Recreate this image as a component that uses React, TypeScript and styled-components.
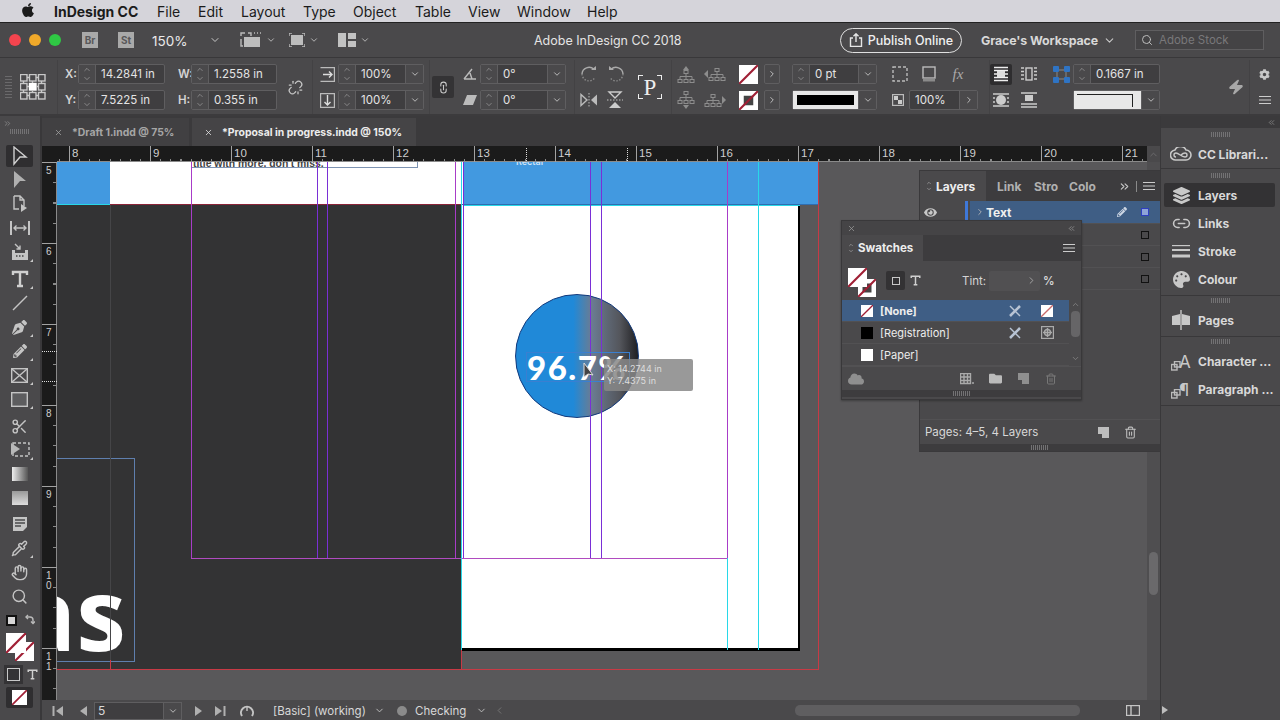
import React from 'react'
import styled, { createGlobalStyle } from 'styled-components'
import {
  ChevronDown,
  ChevronRight,
  ChevronLeft,
  ChevronUp,
  ChevronsRight,
  ChevronsLeft,
  Scissors,
  Search,
  Pipette,
  Hand,
  Trash2,
  X,
  Zap,
  Link2,
  Unlink,
} from 'lucide-react'
import { FaApple, FaCog, FaEye, FaFolder, FaLayerGroup, FaPalette, FaPencilAlt, FaPenNib, FaCloud } from 'react-icons/fa'

const GlobalStyle = createGlobalStyle`
  html, body { margin: 0; padding: 0; background: #4a494b; }
  * { box-sizing: border-box; }
  #root { width: 1280px; height: 720px; overflow: hidden; }
`

const panel = '#4a494b'
const line = '#5f5e60'
const ink = '#d6d6d6'

/* ---------- small drawings ---------- */

const Ico = styled.svg`
  display: block;
  flex: none;
  fill: none;
  stroke: currentColor;
  stroke-width: 1.4;
`

const Grid3 = () => (
  <Ico width="26" height="26" viewBox="0 0 26 26" stroke-width="1">
    {[0, 9, 18].map((y) =>
      [0, 9, 18].map((x) => (
        <rect
          key={`${x}${y}`}
          x={x + 0.5}
          y={y + 0.5}
          width="6.5"
          height="6.5"
          fill={x === 9 && y === 9 ? '#fff' : 'none'}
          stroke={x === 9 && y === 9 ? '#fff' : '#c8c8c8'}
        />
      ))
    )}
    <path d="M7 3.5h2M16 3.5h2M7 12.5h2M16 12.5h2M7 21.5h2M16 21.5h2M3.5 7v2M3.5 16v2M12.5 7v2M12.5 16v2M21.5 7v2M21.5 16v2" stroke="#c8c8c8" />
  </Ico>
)
const ScaleX = () => (
  <Ico width="15" height="15" viewBox="0 0 15 15">
    <path d="M.5.5h14v14H.5" stroke="#bbb" />
    <path d="M3 7.5h9M9 4.5l3 3-3 3" stroke="#ddd" />
  </Ico>
)
const ScaleY = () => (
  <Ico width="15" height="15" viewBox="0 0 15 15">
    <path d="M.5.5h14v14H.5z" stroke="#bbb" />
    <path d="M7.5 2v10M4.5 9l3 3 3-3" stroke="#ddd" />
  </Ico>
)
const Angle = () => (
  <Ico width="14" height="12" viewBox="0 0 14 12">
    <path d="M1 11h12M1 11L9 1M7 5l2 6" stroke="#bbb" />
  </Ico>
)
const Shear = () => (
  <Ico width="14" height="10" viewBox="0 0 14 10">
    <path d="M4 0h10l-4 10H0z" fill="#bbb" stroke="none" />
  </Ico>
)
const Rotate = ({ flip }: { flip?: boolean }) => (
  <Ico width="18" height="16" viewBox="0 0 18 16" style={flip ? { transform: 'scaleX(-1)' } : undefined}>
    <path d="M14 3.5A7 7 0 0 0 2 8" stroke="#aaa" />
    <path d="M2 8a7 7 0 0 0 13 3.5" stroke="#888" strokeDasharray="1.5 1.5" />
    <path d="M11 4h5V0z" fill="#aaa" stroke="none" />
  </Ico>
)
const FlipH = () => (
  <Ico width="18" height="14" viewBox="0 0 18 14">
    <path d="M1 1.5v11L7 7z" stroke="#bbb" />
    <path d="M17 1.5v11L11 7z" fill="#bbb" stroke="none" />
    <path d="M9 0v14" stroke="#999" strokeDasharray="1.5 1.5" />
  </Ico>
)
const FlipV = () => (
  <Ico width="16" height="18" viewBox="0 0 16 18">
    <path d="M2 1h12L8 7z" stroke="#ccc" />
    <path d="M2 17h12L8 11z" fill="#ccc" stroke="none" />
    <path d="M0 9h16" stroke="#999" strokeDasharray="1.5 1.5" />
  </Ico>
)
const Org = ({ d, dx = 0, dy = 0 }: { d: string; dx?: number; dy?: number }) => (
  <Ico width="22" height="18" viewBox="0 0 22 18">
    <g transform={`translate(${dx} ${dy})`} stroke="#8d8d8d" strokeWidth="1">
      <rect x="7" y="0.500" width="4" height="3" />
      <path d="M9 3.500v3M3 9.500V6.500h12v3M9 6.500v3" />
      <rect x="1" y="9.500" width="4" height="3" />
      <rect x="7" y="9.500" width="4" height="3" />
      <rect x="13" y="9.500" width="4" height="3" />
    </g>
    <path d={d} fill="#8d8d8d" stroke="none" />
  </Ico>
)
const CornerBox = () => (
  <Ico width="16" height="16" viewBox="0 0 16 16">
    <rect x="1" y="1" width="14" height="14" stroke="#bbb" strokeDasharray="3 2" />
  </Ico>
)
const DropBox = () => (
  <Ico width="14" height="16" viewBox="0 0 14 16">
    <rect x="1" y="1" width="12" height="11" stroke="#bbb" />
    <path d="M1 14h12" stroke="#8a8a8a" strokeWidth="3" />
  </Ico>
)
const Checker = () => (
  <Ico width="12" height="12" viewBox="0 0 12 12">
    <rect x=".5" y=".5" width="11" height="11" stroke="#bbb" />
    <path d="M2 2h4v4H2zM6 6h4v4H6z" fill="#ccc" stroke="none" />
  </Ico>
)
const WrapA = () => (
  <Ico width="16" height="16" viewBox="0 0 16 16">
    <path d="M1 1.5h14M1 4.5h14M1 8h14M1 11.5h14M1 14.5h14" stroke="#eee" />
    <rect x="4" y="5" width="8" height="6" fill="#ddd" stroke="none" />
  </Ico>
)
const WrapB = () => (
  <Ico width="16" height="16" viewBox="0 0 16 16">
    <rect x="5" y="2" width="6" height="12" stroke="#ccc" />
    <path d="M0 2h3M0 5.5h3M0 9h3M0 13h3M13 2h3M13 5.5h3M13 9h3M13 13h3" stroke="#ccc" />
  </Ico>
)
const WrapC = () => (
  <Ico width="16" height="16" viewBox="0 0 16 16">
    <circle cx="8" cy="8" r="5" fill="#ccc" stroke="none" />
    <path d="M0 2h16M0 14h16M0 6h2M14 6h2M0 10h2M14 10h2" stroke="#ccc" />
  </Ico>
)
const WrapD = () => (
  <Ico width="16" height="16" viewBox="0 0 16 16">
    <rect x="4" y="3" width="8" height="6" fill="#ccc" stroke="none" />
    <path d="M0 1h16M0 12h16M0 15h16" stroke="#ccc" />
  </Ico>
)
const Corners = () => (
  <Ico width="17" height="17" viewBox="0 0 17 17">
    <rect x="4" y="4" width="9" height="9" stroke="#777" />
    {[0, 11].map((y) => [0, 11].map((x) => <rect key={`${x}${y}`} x={x} y={y} width="6" height="6" rx="1" fill="#2f74c4" stroke="none" />))}
  </Ico>
)
const Burger = () => (
  <Ico width="12" height="8" viewBox="0 0 12 8">
    <path d="M0 .5h12M0 4h12M0 7.5h12" stroke="#ccc" strokeWidth="1" />
  </Ico>
)
const Frames = () => (
  <Ico width="22" height="16" viewBox="0 0 22 16">
    <path d="M1 4V1h4M8 1h3v3" stroke="#bbb" />
    <rect x="4" y="5" width="16" height="10" fill="#bdbdbd" stroke="none" />
    <path d="M1 7v7h2" stroke="#bbb" />
    <path d="M14 1h1M17 1h1M20 1h1" stroke="#bbb" />
  </Ico>
)
const FrameFit = () => (
  <Ico width="16" height="14" viewBox="0 0 16 14">
    <rect x="2" y="2" width="12" height="10" fill="#bdbdbd" stroke="none" />
    <path d="M0 3V0h3M13 0h3v3M0 11v3h3M13 14h3v-3" stroke="#bbb" />
  </Ico>
)
const Arrange = () => (
  <Ico width="18" height="14" viewBox="0 0 18 14">
    <path d="M0 0h8v14H0zM10 0h8v6h-8zM10 8h8v6h-8z" fill="#c2c2c2" stroke="none" />
  </Ico>
)
const Share = () => (
  <Ico width="14" height="14" viewBox="0 0 14 14">
    <path d="M4 5H1.5v8.5h11V5H10M7 9V1M4.5 3.3L7 .8l2.5 2.5" stroke="#e6e6e6" />
  </Ico>
)
const Arrow = ({ hollow }: { hollow?: boolean }) => (
  <Ico width="16" height="20" viewBox="0 0 16 20">
    <path d="M2 1l12 10H8l-6 7z" fill={hollow ? 'none' : '#b0b0b0'} stroke={hollow ? '#cfcfcf' : 'none'} />
  </Ico>
)
const PageTool = () => (
  <Ico width="16" height="18" viewBox="0 0 16 18">
    <path d="M2 1h6l4 4v6M8 1v4h4M2 1v13h5" stroke="#c4c4c4" />
    <path d="M9 9l6 4-6 4z" fill="#c4c4c4" stroke="none" />
  </Ico>
)
const GapTool = () => (
  <Ico width="20" height="14" viewBox="0 0 20 14">
    <path d="M1 0v14M19 0v14" stroke="#c4c4c4" strokeWidth="2" />
    <path d="M4 7h12M6.5 4.5L4 7l2.5 2.5M13.5 4.5L16 7l-2.5 2.5" stroke="#c4c4c4" />
  </Ico>
)
const Collector = () => (
  <Ico width="18" height="18" viewBox="0 0 18 18">
    <path d="M1 7h3v3h10V7h3v10H1z" fill="#c4c4c4" stroke="none" />
    <path d="M4 1l5 5M9 2.5V6H5.500" stroke="#c4c4c4" />
    <path d="M5 13h1.500M8 13h1.500M11 13h1.500" stroke="#444" />
  </Ico>
)
const TypeTool = ({ size = 18 }: { size?: number }) => (
  <Ico width={size} height={size} viewBox="0 0 18 18">
    <path d="M2 5V2h14v3M9 2v14M6 16h6" stroke="#d0d0d0" strokeWidth="2.4" />
  </Ico>
)
const LineTool = () => (
  <Ico width="16" height="16" viewBox="0 0 16 16">
    <path d="M1 15L15 1" stroke="#c4c4c4" strokeWidth="1.5" />
  </Ico>
)
const CrossFrame = () => (
  <Ico width="17" height="15" viewBox="0 0 17 15">
    <rect x=".7" y=".7" width="15.600" height="13.600" stroke="#c4c4c4" />
    <path d="M1 1l15 13M16 1L1 14" stroke="#c4c4c4" />
  </Ico>
)
const RectTool = () => (
  <Ico width="17" height="15" viewBox="0 0 17 15">
    <rect x=".7" y=".7" width="15.600" height="13.600" stroke="#c4c4c4" fill="#5d5d5f" />
  </Ico>
)
const FreeTrans = () => (
  <Ico width="20" height="16" viewBox="0 0 20 16">
    <rect x="3" y="1" width="16" height="13" stroke="#c4c4c4" strokeDasharray="3 2" />
    <path d="M1 1l9 6-9 6z" fill="#b8b8b8" stroke="none" />
  </Ico>
)
const Grad = ({ id, vertical }: { id: string; vertical?: boolean }) => (
  <Ico width="16" height="14" viewBox="0 0 16 14">
    <defs>
      <linearGradient id={id} x1="0" y1="0" x2={vertical ? '0' : '1'} y2={vertical ? '1' : '0'}>
        <stop offset="0" stopColor={vertical ? '#999' : '#eee'} />
        <stop offset="1" stopColor={vertical ? '#ddd' : '#555'} />
      </linearGradient>
    </defs>
    <rect width="16" height="14" fill={`url(#${id})`} stroke="none" />
  </Ico>
)
const Note = () => (
  <Ico width="14" height="14" viewBox="0 0 14 14">
    <path d="M0 0h14v10l-4 4H0z" fill="#c4c4c4" stroke="none" />
    <path d="M2 3h10M2 6h10M2 9h6" stroke="#4a494b" />
  </Ico>
)
const Slash = ({ w = 18, bg = '#fff', stroke = '#a01f35', inner }: { w?: number; bg?: string; stroke?: string; inner?: boolean }) => (
  <Ico width={w} height={w} viewBox="0 0 18 18">
    <rect width="18" height="18" fill={bg} stroke="none" />
    {inner && <rect x="4.500" y="4.500" width="9" height="9" fill="#444" stroke="none" />}
    <path d="M0 18L18 0" stroke={stroke} strokeWidth="2" />
  </Ico>
)
const SwapArrow = () => (
  <Ico width="11" height="11" viewBox="0 0 11 11">
    <path d="M2 3h4a3 3 0 0 1 3 3v3" stroke="#bbb" />
    <path d="M4 1L2 3l2 2M7 7.500L9 9.500l2-2" stroke="#bbb" />
  </Ico>
)
const CCLogo = () => (
  <Ico width="22" height="14" viewBox="0 0 22 14">
    <path d="M6 13a5 5 0 0 1-1-10 6 6 0 0 1 11 0 5 5 0 0 1 0 10z" stroke="#c8c8c8" strokeWidth="1.600" />
    <path d="M6 10a2 2 0 0 1 0-4c3 0 5 4 9 4a2 2 0 0 0 0-4c-2 0-3 1-4 2" stroke="#c8c8c8" />
  </Ico>
)
const StrokeLines = () => (
  <Ico width="18" height="13" viewBox="0 0 18 13">
    <path d="M0 .5h18" stroke="#c8c8c8" />
    <path d="M0 5h18" stroke="#c8c8c8" strokeWidth="2" />
    <path d="M0 11h18" stroke="#c8c8c8" strokeWidth="3" />
  </Ico>
)
const PagesIcon = () => (
  <Ico width="18" height="20" viewBox="0 0 18 20">
    <path d="M0 6l8-2v11H0zM10 4l8 2v9h-8z" fill="#c8c8c8" stroke="none" />
    <path d="M9 0v20" stroke="#c8c8c8" />
  </Ico>
)
const StackA = () => (
  <Ico width="10" height="10" viewBox="0 0 10 10">
    <rect x=".5" y="3.500" width="5.500" height="5.500" stroke="#bbb" />
    <rect x="3.500" y=".5" width="5.500" height="5.500" stroke="#bbb" />
  </Ico>
)
const NewPage = () => (
  <Ico width="11" height="11" viewBox="0 0 11 11">
    <path d="M0 0h11v11H4V7H0z" fill="currentColor" stroke="none" />
  </Ico>
)
const GridMenu = () => (
  <Ico width="14" height="12" viewBox="0 0 14 12">
    <path d="M.5.5h10v10H.5zM.5 4h10M.5 7.500h10M4 .5v10M7.500 .5v10" stroke="#aaa" />
    <path d="M12 10h2" stroke="#aaa" />
  </Ico>
)
const DirectGlyph = () => (
  <Ico width="12" height="12" viewBox="0 0 12 12">
    <path d="M1 1l10 10" stroke="#b8c4d4" strokeWidth="1.500" />
    <path d="M11 1L1 11" stroke="#b8c4d4" strokeWidth="2.500" />
  </Ico>
)
const RegMark = () => (
  <Ico width="13" height="13" viewBox="0 0 13 13">
    <rect x=".5" y=".5" width="12" height="12" stroke="#aaa" />
    <circle cx="6.500" cy="6.500" r="3" stroke="#aaa" />
    <path d="M6.500 2v9M2 6.500h9" stroke="#aaa" />
  </Ico>
)
const Clock = () => (
  <Ico width="14" height="14" viewBox="0 0 14 14">
    <path d="M2 12A6 6 0 1 1 12 12" stroke="#c4c4c4" strokeWidth="2" />
    <path d="M7 7V3" stroke="#c4c4c4" />
  </Ico>
)
const Skip = ({ back }: { back?: boolean }) => (
  <Ico width="11" height="10" viewBox="0 0 11 10" style={back ? { transform: 'scaleX(-1)' } : undefined}>
    <path d="M0 0l7 5-7 5z" fill="#b0b0b0" stroke="none" />
    <path d="M9.500 0v10" stroke="#b0b0b0" strokeWidth="2" />
  </Ico>
)
const Step = ({ back }: { back?: boolean }) => (
  <Ico width="7" height="10" viewBox="0 0 7 10" style={back ? { transform: 'scaleX(-1)' } : undefined}>
    <path d="M0 0l7 5-7 5z" fill="#b0b0b0" stroke="none" />
  </Ico>
)
const Pointer = () => (
  <Ico width="14" height="18" viewBox="0 0 14 18">
    <path d="M1 1v14l4-3 5 1z" fill="#444" stroke="#ddd" strokeWidth="1" />
  </Ico>
)

/* ---------- shell ---------- */

const Screen = styled.div`
  width: 1280px;
  height: 720px;
  display: flex;
  flex-direction: column;
  overflow: hidden;
  background: ${panel};
  color: ${ink};
  font-family: 'Inter', 'Liberation Sans', sans-serif;
  font-size: 12px;
`
const MenuBar = styled.div`
  height: 23px;
  flex: none;
  background: #d5d4da;
  border-bottom: 1px solid #222;
  display: flex;
  align-items: center;
  color: #1b1b1b;
  font-size: 14px;
  padding-left: 20px;
`
const MenuItem = styled.span<{ $w?: number; $bold?: boolean }>`
  width: ${(p) => p.$w}px;
  font-weight: ${(p) => (p.$bold ? 700 : 400)};
  flex: none;
`
const TitleBar = styled.div`
  height: 35px;
  flex: none;
  display: flex;
  align-items: center;
  border-bottom: 1px solid #39383a;
  position: relative;
`
const Light = styled.span<{ $c: string }>`
  width: 12px;
  height: 12px;
  border-radius: 50%;
  background: ${(p) => p.$c};
  margin-right: 8px;
  flex: none;
`
const Lights = styled.div`
  display: flex;
  padding-left: 9px;
  width: 82px;
`
const Badge = styled.span`
  width: 16px;
  height: 16px;
  background: #a9a9a9;
  color: #59585a;
  font-size: 10px;
  font-weight: 700;
  display: flex;
  align-items: center;
  justify-content: center;
  margin-right: 20px;
  flex: none;
`
const Zoom = styled.span`
  font-size: 13.5px;
  color: #eaeaea;
  width: 55px;
  margin-left: -2px;
  margin-top: 2px;
`
const ViewGroup = styled.div`
  display: flex;
  align-items: center;
  gap: 4px;
  width: 49px;
  flex: none;
  color: #c8c8c8;
`
const AppTitle = styled.span`
  width: 146px;
  flex: none;
  font-size: 12.5px;
  color: #e4e4e4;
  margin-left: 147px;
  margin-right: 160px;
  white-space: nowrap;
`
const Publish = styled.span`
  width: 122px;
  height: 25px;
  border: 1px solid #e0e0e0;
  border-radius: 13px;
  display: flex;
  align-items: center;
  justify-content: center;
  gap: 5px;
  color: #f0f0f0;
  font-size: 12.5px;
  font-weight: 500;
  flex: none;
`
const Workspace = styled.span`
  margin-left: 19px;
  width: 115px;
  flex: none;
  font-size: 12.4px;
  font-weight: 700;
  color: #d8d8d8;
  white-space: nowrap;
  letter-spacing: -0.1px;
`
const StockSearch = styled.div`
  width: 129px;
  height: 20px;
  flex: none;
  margin-left: 13px;
  border: 1px solid #5f5e60;
  background: #444345;
  display: flex;
  align-items: center;
  gap: 6px;
  padding-left: 5px;
  font-size: 11.5px;
  color: #79787a;
  white-space: nowrap;
`

/* ---------- control panel ---------- */

const ControlPanel = styled.div`
  height: 58px;
  flex: none;
  display: flex;
  padding-top: 2px;
  border-bottom: 2px solid #3c3b3d;
`
const Group = styled.div<{ $w: number; $line?: boolean }>`
  width: ${(p) => p.$w}px;
  flex: none;
  height: 100%;
  display: flex;
  align-items: center;
  border-right: ${(p) => (p.$line ? '1px solid #434244' : 'none')};
`
const Rows = styled.div<{ $pl?: number; $w?: number }>`
  display: grid;
  grid-template-rows: 20px 20px;
  row-gap: 6px;
  padding-left: ${(p) => p.$pl ?? 0}px;
  width: ${(p) => (p.$w ? `${p.$w}px` : 'auto')};
  flex: none;
`
const Row = styled.div<{ $gap?: number }>`
  display: flex;
  align-items: center;
  gap: ${(p) => p.$gap ?? 0}px;
  height: 20px;
`
const Label = styled.span<{ $w: number }>`
  width: ${(p) => p.$w}px;
  flex: none;
  font-size: 11.5px;
  font-weight: 600;
  color: #d4d4d4;
`
const IconSlot = styled.span<{ $w: number }>`
  width: ${(p) => p.$w}px;
  height: 20px;
  flex: none;
  display: flex;
  align-items: center;
  justify-content: center;
  color: #c8c8c8;
`
const Field = styled.div<{ $w: number }>`
  width: ${(p) => p.$w}px;
  height: 20px;
  flex: none;
  display: flex;
  align-items: stretch;
  border: 1px solid ${line};
  border-radius: 2px;
  background: #3f3e40;
`
const Spin = styled.span`
  width: 17px;
  flex: none;
  display: flex;
  flex-direction: column;
  align-items: center;
  justify-content: center;
  border-right: 1px solid ${line};
  color: #c4c4c4;
  background: ${panel};
`
const Val = styled.span`
  flex: 1;
  min-width: 0;
  padding-left: 5px;
  font-size: 11.5px;
  line-height: 18px;
  color: #e4e4e4;
  white-space: nowrap;
`
const Drop = styled.span`
  width: 18px;
  flex: none;
  display: flex;
  align-items: center;
  justify-content: center;
  border-left: 1px solid ${line};
  color: #cfcfcf;
  background: #4a494b;
`
const Spinner = () => (
  <Spin>
    <ChevronUp size={10} strokeWidth={1.3} />
    <ChevronDown size={10} strokeWidth={1.3} />
  </Spin>
)
const NumField = ({ w, value, drop, next }: { w: number; value: string; drop?: boolean; next?: boolean }) => (
  <Field $w={w}>
    {!next && <Spinner />}
    <Val>{value}</Val>
    {drop && (
      <Drop>
        <ChevronDown size={10} />
      </Drop>
    )}
    {next && (
      <Drop>
        <ChevronRight size={10} />
      </Drop>
    )}
  </Field>
)
const ChainBtn = styled.span`
  width: 22px;
  height: 22px;
  margin-left: 2px;
  background: #343335;
  border-radius: 2px;
  display: flex;
  align-items: center;
  justify-content: center;
  color: #c8c8c8;
`
const GlyphBox = styled.span`
  width: 26px;
  height: 26px;
  margin-left: 12px;
  flex: none;
  font-family: 'Liberation Serif', serif;
  font-size: 23px;
  line-height: 26px;
  text-align: center;
  color: #eee;
  border: 1px solid transparent;
  background:
    linear-gradient(#eee, #eee) 0 0 / 5px 1px no-repeat,
    linear-gradient(#eee, #eee) 0 0 / 1px 5px no-repeat,
    linear-gradient(#eee, #eee) 100% 0 / 5px 1px no-repeat,
    linear-gradient(#eee, #eee) 100% 0 / 1px 5px no-repeat,
    linear-gradient(#eee, #eee) 0 100% / 5px 1px no-repeat,
    linear-gradient(#eee, #eee) 0 100% / 1px 5px no-repeat,
    linear-gradient(#eee, #eee) 100% 100% / 5px 1px no-repeat,
    linear-gradient(#eee, #eee) 100% 100% / 1px 5px no-repeat;
`
const SmallNext = styled.span`
  width: 16px;
  height: 20px;
  flex: none;
  border: 1px solid ${line};
  border-radius: 2px;
  display: flex;
  align-items: center;
  justify-content: center;
  color: #d4d4d4;
`
const StrokePreview = styled.div`
  flex: 1;
  background: #e8e8e8;
  padding: 4px;
`
const StrokeBlack = styled.div`
  height: 10px;
  background: #000;
`
const CornerPreview = styled.div`
  flex: 1;
  background: #e8e8e8;
  position: relative;
  &::after {
    content: '';
    position: absolute;
    left: 3px;
    right: 8px;
    top: 3px;
    bottom: 2px;
    border-top: 1px solid #222;
    border-right: 1px solid #222;
  }
`
const ActiveWrap = styled.span`
  width: 22px;
  height: 21px;
  background: #2e2d2f;
  border-radius: 2px;
  display: flex;
  align-items: center;
  justify-content: center;
`
const GripV = styled.span`
  width: 7px;
  height: 22px;
  margin-left: 5px;
  flex: none;
  background: repeating-linear-gradient(#6a696b 0 1px, transparent 1px 3px);
`
const GripH = styled.div<{ $w?: number }>`
  width: ${(p) => p.$w ?? 20}px;
  height: 5px;
  margin: 0 auto;
  background: repeating-linear-gradient(90deg, #737274 0 1px, transparent 1px 2px);
`

/* ---------- body ---------- */

const Body = styled.div`
  flex: 1;
  display: flex;
  min-height: 0;
`
const Toolbox = styled.div`
  width: 42px;
  flex: none;
  display: flex;
  flex-direction: column;
  border-right: 2px solid #39383a;
  background: ${panel};
  padding-top: 2px;
  color: #c4c4c4;
`
const Collapse = styled.div`
  height: 11px;
  padding-left: 3px;
  color: #8f8f8f;
  display: flex;
  align-items: center;
`
const ToolGrip = styled(GripH)`
  margin-top: 0;
  margin-bottom: 10px;
`
const Tool = styled.div<{ $active?: boolean; $mt?: number; $more?: boolean }>`
  width: 27px;
  height: ${(p) => (p.$active ? 22 : 24)}px;
  margin: ${(p) => (p.$active ? '1px' : `${p.$mt ?? 0}px`)} 0 ${(p) => (p.$active ? '1px' : '0')} 6px;
  display: flex;
  align-items: center;
  justify-content: center;
  flex: none;
  position: relative;
  border-radius: 2px;
  background: ${(p) => (p.$active ? '#2f2e30' : 'transparent')};
  &::after {
    content: '';
    display: ${(p) => (p.$more ? 'block' : 'none')};
    position: absolute;
    right: 0;
    bottom: 2px;
    border-left: 3px solid transparent;
    border-bottom: 3px solid #c8c8c8;
  }
`
const ColorWell = styled.div`
  height: 48px;
  margin-top: 4px;
  padding: 5px 0 0 6px;
  position: relative;
`
const WellBack = styled.div`
  position: absolute;
  left: 15px;
  top: 30px;
`
const WellFront = styled.div`
  position: absolute;
  left: 6px;
  top: 21px;
`
const MiniDefault = styled.div`
  width: 11px;
  height: 11px;
  background: #d7d7d7;
  border: 2px solid #111;
  margin-top: -2px;
`
const MiniSwap = styled.span`
  position: absolute;
  left: 24px;
  top: 2px;
  color: #bbb;
`
const FormatRow = styled.div`
  display: flex;
  align-items: center;
  gap: 7px;
  height: 22px;
  padding-left: 7px;
  margin-top: 3px;
`
const FormatBtn = styled.span`
  width: 13px;
  height: 13px;
  border: 1px solid #c8c8c8;
  outline: 3px solid #343335;
  background: #343335;
`
const PreviewBtn = styled.div`
  width: 27px;
  height: 21px;
  margin: 2px 0 0 6px;
  background: #2f2e30;
  border-radius: 2px;
  display: flex;
  align-items: center;
  justify-content: center;
`

const Center = styled.div`
  width: 1118px;
  flex: none;
  display: flex;
  flex-direction: column;
`
const TabBar = styled.div`
  height: 30px;
  flex: none;
  background: #3b3a3c;
  display: flex;
  padding-top: 2px;
`
const Tab = styled.div<{ $w: number; $active?: boolean }>`
  width: ${(p) => p.$w}px;
  margin-right: 3px;
  background: ${(p) => (p.$active ? '#454446' : '#414042')};
  color: ${(p) => (p.$active ? '#ececec' : '#a6a6a6')};
  display: flex;
  align-items: center;
  gap: 9px;
  padding-left: 12px;
  font-size: 10.4px;
  font-weight: 700;
  white-space: nowrap;
`
const RulerRow = styled.div`
  height: 16px;
  flex: none;
  display: flex;
`
const RulerCorner = styled.div`
  width: 15px;
  flex: none;
  background: #1b1b1b;
`
const HRuler = styled.div`
  width: 1090px;
  flex: none;
  background:
    linear-gradient(#8a8a8a, #8a8a8a) 0 100% / 100% 1px no-repeat,
    repeating-linear-gradient(90deg, #8a8a8a 0 1px, transparent 1px 10.125px) 2px 100% / 100% 3px no-repeat,
    #1b1b1b;
  display: flex;
  padding-left: 12px;
  overflow: hidden;
  position: relative;
`
const HTick = styled.div`
  width: 81px;
  flex: none;
  height: 100%;
  padding-left: 2px;
  border-left: 1px solid #a2a2a2;
  color: #cfcfcf;
  font-family: 'Liberation Sans', sans-serif;
  font-size: 11.5px;
  line-height: 14px;
`
const HDots = styled.span<{ $x: number }>`
  position: absolute;
  left: ${(p) => p.$x}px;
  top: 2px;
  width: 1px;
  height: 14px;
  background: repeating-linear-gradient(#ddd 0 1px, transparent 1px 2px);
`
const ScrollCap = styled.div`
  width: 13px;
  flex: none;
  display: flex;
  align-items: center;
  justify-content: center;
  color: #6d6c6e;
`
const CanvasRow = styled.div`
  flex: 1;
  display: flex;
  min-height: 0;
  position: relative;
`
const VRuler = styled.div`
  width: 15px;
  flex: none;
  overflow: hidden;
  position: relative;
  background:
    linear-gradient(#8a8a8a, #8a8a8a) 100% 0 / 1px 100% no-repeat,
    repeating-linear-gradient(#8a8a8a 0 1px, transparent 1px 20.250px) 100% 0 / 4px 100% no-repeat,
    #1b1b1b;
`
const VTick = styled.div`
  height: 81px;
  border-top: 1px solid #a2a2a2;
  padding: 3px 0 0 4px;
  width: 100%;
  color: #cfcfcf;
  font-family: 'Liberation Sans', sans-serif;
  font-size: 10px;
  line-height: 10px;
`
const VDigit = styled.span`
  display: block;
`
const Stage = styled.div`
  width: 1090px;
  flex: none;
  position: relative;
  overflow: hidden;
  background: #59585a;
`
const Sheet = styled.div<{ $x: number; $y: number; $w: number; $h: number; $c: string }>`
  position: absolute;
  left: ${(p) => p.$x}px;
  top: ${(p) => p.$y}px;
  width: ${(p) => p.$w}px;
  height: ${(p) => p.$h}px;
  background: ${(p) => p.$c};
`
const PageEdge = styled(Sheet)`
  border-right: 2px solid #000;
  border-bottom: 3px solid #000;
`
const VGuide = styled.div<{ $x: number; $y: number; $h: number; $c: string }>`
  position: absolute;
  left: ${(p) => p.$x}px;
  top: ${(p) => p.$y}px;
  width: 1px;
  height: ${(p) => p.$h}px;
  background: ${(p) => p.$c};
`
const HGuide = styled.div<{ $x: number; $y: number; $w: number; $c: string }>`
  position: absolute;
  left: ${(p) => p.$x}px;
  top: ${(p) => p.$y}px;
  height: 1px;
  width: ${(p) => p.$w}px;
  background: ${(p) => p.$c};
`
const BigWordFrame = styled.div`
  position: absolute;
  left: 0;
  top: 296px;
  width: 78px;
  height: 204px;
  border: 1px solid #5f7fae;
  border-left: none;
  overflow: hidden;
`
const BigWord = styled.span`
  position: absolute;
  right: 8px;
  top: 103px;
  font-family: 'Open Sans', sans-serif;
  font-weight: 700;
  font-size: 100px;
  line-height: 100px;
  color: #fff;
`
const TopFrame = styled.div`
  position: absolute;
  left: 134px;
  top: 0;
  width: 227px;
  height: 6px;
  border: 1px solid #7d93b2;
  border-top: none;
  overflow: hidden;
  font-family: 'Liberation Sans', sans-serif;
  font-size: 10.4px;
  font-weight: 700;
  color: #444;
  line-height: 4px;
  padding-left: 1px;
  white-space: nowrap;
`
const TopText = styled.span`
  position: absolute;
  left: 459px;
  top: -6px;
  font-size: 9px;
  line-height: 11px;
  color: #cfe3f7;
  font-weight: 600;
`
const Circle = styled.div`
  position: absolute;
  left: 458px;
  top: 132px;
  width: 124px;
  height: 124px;
  border-radius: 50%;
  border: 1px solid #123a7d;
  background: linear-gradient(90deg, #2089d8 0%, #2089d8 47%, #6b7c92 62%, #54565c 85%, #1f1f22 100%);
`
const Percent = styled.span`
  position: absolute;
  left: 470px;
  top: 185px;
  font-family: 'Lato', sans-serif;
  font-weight: 900;
  font-size: 33px;
  line-height: 40px;
  letter-spacing: 1.5px;
  color: #fff;
`
const PickFrame = styled.div`
  position: absolute;
  left: 469px;
  top: 190px;
  width: 104px;
  height: 30px;
  border: 1px solid #3a7fd0;
`
const DragTip = styled.div`
  position: absolute;
  left: 547px;
  top: 197px;
  width: 89px;
  height: 32px;
  padding: 4px 0 0 3px;
  background: rgba(135, 135, 135, 0.85);
  border-radius: 2px;
  font-size: 9px;
  line-height: 12px;
  color: #dedede;
  white-space: nowrap;
`
const CursorSpot = styled.div`
  position: absolute;
  left: 526px;
  top: 200px;
`
const RulerDots = styled.div<{ $y: number }>`
  position: absolute;
  left: 0;
  top: ${(p) => p.$y}px;
  width: 15px;
  height: 1px;
  background: repeating-linear-gradient(90deg, #ddd 0 1px, transparent 1px 2px);
`
const VScroll = styled.div`
  width: 13px;
  flex: none;
  background: #4f4e50;
  padding-top: 390px;
`
const VThumb = styled.div`
  width: 9px;
  height: 43px;
  margin-left: 2px;
  border-radius: 5px;
  background: #6a696b;
`

/* ---------- floating panels ---------- */

const LayersPanel = styled.div`
  position: absolute;
  left: 877px;
  top: 8px;
  width: 241px;
  height: 282px;
  background: ${panel};
  border: 1px solid #3a393b;
  border-right: none;
  display: flex;
  flex-direction: column;
`
const PanelTabs = styled.div`
  height: 30px;
  flex: none;
  display: flex;
  align-items: center;
  background: #3d3c3e;
`
const PanelTab = styled.span<{ $w: number; $active?: boolean }>`
  width: ${(p) => p.$w}px;
  flex: none;
  height: 100%;
  display: flex;
  align-items: center;
  gap: 4px;
  padding-left: ${(p) => (p.$active ? 6 : 0)}px;
  background: ${(p) => (p.$active ? panel : 'transparent')};
  color: ${(p) => (p.$active ? '#eee' : '#b0b0b0')};
  font-size: 12px;
  font-weight: 700;
`
const TabDivider = styled.span`
  width: 11px;
  flex: none;
  height: 11px;
  margin-left: 0;
  background: linear-gradient(#8a8a8a, #8a8a8a) 5px 0 / 1px 100% no-repeat;
`
const LayerRow = styled.div<{ $sel?: boolean }>`
  height: ${(p) => (p.$sel ? 23 : 22)}px;
  flex: none;
  display: flex;
  align-items: center;
  margin-left: ${(p) => (p.$sel ? 0 : 50)}px;
  background: ${(p) => (p.$sel ? 'linear-gradient(90deg, transparent 50px, #3f5e85 50px)' : 'transparent')};
  border-bottom: 1px solid #525153;
  font-size: 12px;
  font-weight: 700;
  color: #f0f0f0;
  padding-right: 11px;
  justify-content: flex-end;
`
const LayerSquare = styled.span<{ $blue?: boolean }>`
  width: 8px;
  height: 8px;
  border: 1.500px solid ${(p) => (p.$blue ? '#2f3fc0' : '#111')};
  background: ${(p) => (p.$blue ? '#8fa4d8' : 'transparent')};
  flex: none;
`
const LayerName = styled.span`
  display: flex;
  align-items: center;
  flex: 1;
  padding-left: 7px;
  gap: 1px;
  height: 100%;
`
const EyeSlot = styled.span`
  width: 21px;
  margin-right: 24px;
  flex: none;
  display: flex;
  justify-content: center;
  color: #c8c8c8;
`
const BlueBar = styled.span`
  width: 3px;
  height: 100%;
  flex: none;
  background: #3f78d8;
`
const PanelFoot = styled.div`
  margin-top: auto;
  height: 25px;
  flex: none;
  display: flex;
  align-items: center;
  padding: 0 23px 0 5px;
  border-top: 1px solid #525153;
  font-size: 11.5px;
  color: #d8d8d8;
  gap: 0;
`
const FootText = styled.span`
  flex: 1;
`
const FootIcon = styled.span<{ $w: number }>`
  width: ${(p) => p.$w}px;
  display: flex;
  justify-content: flex-end;
  color: #bdbdbd;
`
const PanelGrip = styled.div`
  height: 7px;
  flex: none;
  background: #3d3c3e;
  display: flex;
  align-items: center;
`
const SwatchPanel = styled.div`
  position: absolute;
  left: 799px;
  top: 58px;
  width: 241px;
  height: 180px;
  background: ${panel};
  border: 1px solid #39383a;
  display: flex;
  flex-direction: column;
  box-shadow: 0 1px 2px rgba(0, 0, 0, 0.3);
`
const PanelTop = styled.div`
  height: 14px;
  flex: none;
  background: #454446;
  display: flex;
  align-items: center;
  justify-content: space-between;
  padding: 0 5px;
  color: #9a9a9a;
`
const SwatchTabs = styled.div`
  height: 26px;
  flex: none;
  display: flex;
  background: #3d3c3e;
`
const SwatchTab = styled.span`
  width: 81px;
  background: ${panel};
  display: flex;
  align-items: center;
  gap: 4px;
  padding-left: 6px;
  color: #eee;
  font-size: 11.5px;
  font-weight: 700;
`
const TabMenu = styled.span`
  flex: 1;
  display: flex;
  justify-content: flex-end;
  align-items: center;
  padding-right: 6px;
`
const Updown = styled.span`
  display: flex;
  flex-direction: column;
  color: #c0c0c0;
`
const SwatchTools = styled.div`
  height: 39px;
  flex: none;
  display: flex;
  align-items: center;
  position: relative;
  padding-left: 44px;
`
const WellSm = styled.div<{ $x: number; $y: number }>`
  position: absolute;
  left: ${(p) => p.$x}px;
  top: ${(p) => p.$y}px;
`
const FmtBtn = styled.span`
  width: 19px;
  height: 19px;
  background: #333234;
  border-radius: 2px;
  display: flex;
  align-items: center;
  justify-content: center;
  margin-right: 5px;
`
const FmtInner = styled.span`
  width: 8px;
  height: 8px;
  border: 1px solid #c8c8c8;
`
const TintLabel = styled.span`
  margin-left: 41px;
  width: 27px;
  flex: none;
  font-size: 11.5px;
  color: #d4d4d4;
  white-space: nowrap;
`
const TintField = styled.span`
  width: 51px;
  height: 20px;
  flex: none;
  background: #515052;
  border-radius: 2px;
  display: flex;
  align-items: center;
  justify-content: flex-end;
  padding-right: 3px;
  color: #a8a8a8;
`
const Pct = styled.span`
  margin-left: 3px;
  font-size: 11.5px;
  font-weight: 600;
`
const ListWrap = styled.div`
  height: 66px;
  flex: none;
  display: flex;
`
const List = styled.div`
  width: 227px;
  flex: none;
`
const SwatchRow = styled.div<{ $sel?: boolean }>`
  height: 22px;
  display: flex;
  align-items: center;
  padding-left: 19px;
  background: ${(p) => (p.$sel ? '#3f5e85' : 'transparent')};
  border-bottom: 1px solid #525153;
  font-size: 11px;
  font-weight: ${(p) => (p.$sel ? 700 : 400)};
  color: #ededed;
`
const Chip = styled.span<{ $c?: string }>`
  width: 12px;
  height: 12px;
  background: ${(p) => p.$c ?? 'transparent'};
  margin-right: 7px;
  flex: none;
`
const ChipName = styled.span`
  width: 119px;
  flex: none;
  white-space: nowrap;
`
const ChipCol = styled.span`
  width: 32px;
  flex: none;
  display: flex;
  justify-content: center;
`
const ListScroll = styled.div`
  flex: 1;
  display: flex;
  flex-direction: column;
  align-items: center;
  color: #8a8a8a;
  gap: 0;
`
const ListThumb = styled.span`
  width: 9px;
  height: 26px;
  flex: none;
  border-radius: 4px;
  margin: 2px 0 17px;
  background: #666567;
`
const SwatchFoot = styled.div`
  height: 24px;
  flex: none;
  display: flex;
  align-items: center;
  padding-left: 6px;
  border-top: 1px solid #525153;
  color: #8f8f8f;
`
const FootBtn = styled.span<{ $w: number }>`
  width: ${(p) => p.$w}px;
  display: flex;
  justify-content: flex-end;
  flex: none;
`

/* ---------- status + dock ---------- */

const StatusBar = styled.div`
  height: 20px;
  flex: none;
  display: flex;
  align-items: center;
  padding-top: 1px;
  background: ${panel};
  font-size: 11.5px;
  color: #d8d8d8;
`
const StatSlot = styled.span<{ $w: number }>`
  width: ${(p) => p.$w}px;
  height: 100%;
  flex: none;
  display: flex;
  align-items: center;
  justify-content: center;
  color: #c4c4c4;
`
const StatText = styled.span<{ $w: number }>`
  width: ${(p) => p.$w}px;
  flex: none;
  white-space: nowrap;
`
const PageBox = styled.div`
  width: 88px;
  height: 18px;
  flex: none;
  border: 1px solid ${line};
  display: flex;
  align-items: stretch;
  background: #3f3e40;
`
const PageVal = styled.span`
  flex: 1;
  padding-left: 3px;
  line-height: 16px;
  font-size: 12px;
`
const Dot = styled.span`
  width: 10px;
  height: 10px;
  border-radius: 50%;
  background: #8b8b8b;
  flex: none;
`
const HScroll = styled.div`
  flex: none;
  width: 285px;
  height: 11px;
  margin-left: 0;
  border-radius: 5px;
  background: #5f5e60;
`
const Dock = styled.div`
  width: 120px;
  flex: none;
  display: flex;
  flex-direction: column;
  background: ${panel};
  border-left: 1px solid #39383a;
`
const DockTop = styled.div`
  height: 12px;
  background: #3b3a3c;
  display: flex;
  justify-content: flex-end;
  align-items: center;
  padding-right: 4px;
  color: #8f8f8f;
  flex: none;
`
const DockSection = styled.div<{ $top?: number; $pad?: number }>`
  padding: ${(p) => p.$top ?? 2}px 0 ${(p) => p.$pad ?? 2}px;
  border-bottom: 1px solid #39383a;
  display: flex;
  flex-direction: column;
  align-items: stretch;
`
const DockGrip = styled(GripH)`
  margin-bottom: 3px;
`
const DockItem = styled.div<{ $active?: boolean; $mt?: number }>`
  height: ${(p) => (p.$active ? 24 : 28)}px;
  margin: ${(p) => (p.$active ? '2px 5px 2px 3px' : `${p.$mt ?? 0}px 5px 0 3px`)};
  display: flex;
  align-items: center;
  border-radius: 2px;
  background: ${(p) => (p.$active ? '#333234' : 'transparent')};
  font-size: 12px;
  font-weight: 700;
  color: #d8d8d8;
  white-space: nowrap;
`
const DockIcon = styled.span`
  width: 34px;
  height: 20px;
  display: flex;
  justify-content: center;
  align-items: center;
  flex: none;
  color: #c8c8c8;
`
const DockGlyph = styled.span`
  display: flex;
  align-items: flex-end;
  width: 20px;
  height: 20px;
`
const GlyphChar = styled.span`
  font-size: 17px;
  line-height: 18px;
  font-weight: 400;
  color: #c8c8c8;
  margin-left: -2px;
`
const DockFill = styled.div`
  flex: 1;
  display: flex;
  align-items: flex-end;
`
const DockCorner = styled.span`
  height: 20px;
  padding-left: 1px;
  display: flex;
  align-items: center;
  color: #bdbdbd;
`

const menu: [string, number][] = [
  ['File', 41],
  ['Edit', 43],
  ['Layout', 62],
  ['Type', 50],
  ['Object', 62],
  ['Table', 53],
  ['View', 49],
  ['Window', 70],
  ['Help', 40],
]

const hTicks = [8, 9, 10, 11, 12, 13, 14, 15, 16, 17, 18, 19, 20, 21]
const vTicks = ['5', '6', '7', '8', '9', '10', '11']

const purple = '#7a2fd6'
const magenta = '#a83cc8'
const cyan = '#28d8e8'
const red = '#c83a45'

const vGuides = [
  { x: 134, y: 0, h: 396, c: magenta },
  { x: 260, y: 0, h: 396, c: purple },
  { x: 270, y: 0, h: 396, c: purple },
  { x: 398, y: 0, h: 396, c: magenta },
  { x: 406, y: 0, h: 396, c: purple },
  { x: 533, y: 0, h: 396, c: purple },
  { x: 544, y: 0, h: 396, c: purple },
  { x: 670, y: 0, h: 396, c: magenta },
  { x: 404, y: 0, h: 488, c: cyan },
  { x: 670, y: 396, h: 92, c: cyan },
  { x: 701, y: 0, h: 488, c: cyan },
  { x: 53, y: 43, h: 455, c: '#454547' },
  { x: 404, y: 488, h: 20, c: red },
  { x: 53, y: 498, h: 10, c: red },
  { x: 761, y: 0, h: 508, c: red },
]

const App = () => (
  <>
    <GlobalStyle />
    <Screen>
      <MenuBar>
        <MenuItem $w={34}>
          <FaApple size={16} />
        </MenuItem>
        <MenuItem $w={103} $bold>
          InDesign CC
        </MenuItem>
        {menu.map(([m, w]) => (
          <MenuItem key={m} $w={w}>
            {m}
          </MenuItem>
        ))}
      </MenuBar>

      <TitleBar>
        <Lights>
          <Light $c="#f3444e" />
          <Light $c="#f0a92a" />
          <Light $c="#2fc844" />
        </Lights>
        <Badge>Br</Badge>
        <Badge>St</Badge>
        <Zoom>150%</Zoom>
        <IconSlot $w={16}>
          <ChevronDown size={12} />
        </IconSlot>
        <IconSlot $w={17} />
        <ViewGroup>
          <Frames />
          <ChevronDown size={10} />
        </ViewGroup>
        <ViewGroup>
          <FrameFit />
          <ChevronDown size={10} />
        </ViewGroup>
        <ViewGroup>
          <Arrange />
          <ChevronDown size={10} />
        </ViewGroup>
        <AppTitle>Adobe InDesign CC 2018</AppTitle>
        <Publish>
          <Share />
          Publish Online
        </Publish>
        <Workspace>Grace&apos;s Workspace</Workspace>
        <IconSlot $w={26}>
          <ChevronDown size={13} />
        </IconSlot>
        <StockSearch>
          <Search size={12} color="#bcbcbc" />
          Adobe Stock
        </StockSearch>
      </TitleBar>

      <ControlPanel>
        <Group $w={58} $line>
          <GripV />
          <IconSlot $w={41}>
            <Grid3 />
          </IconSlot>
        </Group>
        <Group $w={255} $line>
          <Rows $pl={7}>
            <Row>
              <Label $w={13}>X:</Label>
              <NumField w={87} value="14.2841 in" />
              <IconSlot $w={13} />
              <Label $w={13}>W:</Label>
              <NumField w={86} value="1.2558 in" />
            </Row>
            <Row>
              <Label $w={13}>Y:</Label>
              <NumField w={87} value="7.5225 in" />
              <IconSlot $w={13} />
              <Label $w={13}>H:</Label>
              <NumField w={86} value="0.355 in" />
            </Row>
          </Rows>
          <IconSlot $w={36}>
            <Unlink size={15} />
          </IconSlot>
        </Group>
        <Group $w={117} $line>
          <Rows $pl={7}>
            <Row $gap={3}>
              <ScaleX />
              <NumField w={86} value="100%" drop />
            </Row>
            <Row $gap={3}>
              <ScaleY />
              <NumField w={86} value="100%" drop />
            </Row>
          </Rows>
        </Group>
        <Group $w={27}>
          <ChainBtn>
            <Link2 size={13} transform="rotate(90)" />
          </ChainBtn>
        </Group>
        <Group $w={118} $line>
          <Rows $pl={6}>
            <Row $gap={4}>
              <IconSlot $w={13}>
                <Angle />
              </IconSlot>
              <NumField w={86} value="0°" drop />
            </Row>
            <Row $gap={4}>
              <IconSlot $w={13}>
                <Shear />
              </IconSlot>
              <NumField w={86} value="0°" drop />
            </Row>
          </Rows>
        </Group>
        <Group $w={97} $line>
          <Rows $pl={5}>
            <Row $gap={9}>
              <Rotate />
              <Rotate flip />
            </Row>
            <Row $gap={9}>
              <FlipH />
              <FlipV />
            </Row>
          </Rows>
          <GlyphBox>P</GlyphBox>
        </Group>
        <Group $w={61}>
          <Rows $pl={5}>
            <Row $gap={5}>
              <Org d="M6 5l3-4 3 4z" dy={5} />
              <Org d="M0 9l4-4v8z" dx={4} dy={3} />
            </Row>
            <Row $gap={5}>
              <Org d="M6 14l3 4 3-4z" />
              <Org d="M22 9l-4-4v8z" dy={3} />
            </Row>
          </Rows>
        </Group>
        <Group $w={52}>
          <Rows $pl={6}>
            <Row $gap={6}>
              <Slash w={19} />
              <SmallNext>
                <ChevronRight size={10} />
              </SmallNext>
            </Row>
            <Row $gap={6}>
              <Slash w={19} inner />
              <SmallNext>
                <ChevronRight size={10} />
              </SmallNext>
            </Row>
          </Rows>
        </Group>
        <Group $w={100}>
          <Rows $pl={7}>
            <Row>
              <NumField w={85} value="0 pt" drop />
            </Row>
            <Row>
              <Field $w={85}>
                <StrokePreview>
                  <StrokeBlack />
                </StrokePreview>
                <Drop>
                  <ChevronDown size={10} />
                </Drop>
              </Field>
            </Row>
          </Rows>
        </Group>
        <Group $w={105} $line>
          <Rows $pl={7}>
            <Row $gap={13}>
              <IconSlot $w={16}>
                <CornerBox />
              </IconSlot>
              <IconSlot $w={16}>
                <DropBox />
              </IconSlot>
              <IconSlot $w={16}>
                <em style={{ fontFamily: 'Liberation Serif', fontSize: 15, color: '#aaa' }}>fx</em>
              </IconSlot>
            </Row>
            <Row $gap={5}>
              <Checker />
              <NumField w={69} value="100%" next />
            </Row>
          </Rows>
        </Group>
        <Group $w={55}>
          <Rows>
            <Row $gap={9}>
              <ActiveWrap>
                <WrapA />
              </ActiveWrap>
              <WrapB />
            </Row>
            <Row $gap={9}>
              <IconSlot $w={22}>
                <WrapC />
              </IconSlot>
              <WrapD />
            </Row>
          </Rows>
        </Group>
        <Group $w={183}>
          <Rows $pl={8}>
            <Row $gap={3}>
              <Corners />
              <NumField w={87} value="0.1667 in" />
            </Row>
            <Row>
              <IconSlot $w={20} />
              <Field $w={87}>
                <CornerPreview />
                <Drop>
                  <ChevronDown size={10} />
                </Drop>
              </Field>
            </Row>
          </Rows>
        </Group>
        <Group $w={22} $line>
          <Zap size={16} fill="#a8a8a8" color="#a8a8a8" transform="skewX(-8)" />
        </Group>
        <Group $w={30}>
          <Rows $pl={9}>
            <Row>
              <FaCog size={11} color="#c8c8c8" />
            </Row>
            <Row>
              <Burger />
            </Row>
          </Rows>
        </Group>
      </ControlPanel>

      <Body>
        <Toolbox>
          <Collapse>
            <ChevronsRight size={9} />
          </Collapse>
          <ToolGrip />
          <Tool $active>
            <Arrow hollow />
          </Tool>
          <Tool>
            <Arrow />
          </Tool>
          <Tool>
            <PageTool />
          </Tool>
          <Tool>
            <GapTool />
          </Tool>
          <Tool $more>
            <Collector />
          </Tool>
          <Tool $mt={3} $more>
            <TypeTool />
          </Tool>
          <Tool>
            <LineTool />
          </Tool>
          <Tool $more>
            <FaPenNib size={15} />
          </Tool>
          <Tool $more>
            <FaPencilAlt size={14} />
          </Tool>
          <Tool $more>
            <CrossFrame />
          </Tool>
          <Tool $more>
            <RectTool />
          </Tool>
          <Tool $mt={3}>
            <Scissors size={17} />
          </Tool>
          <Tool $more>
            <FreeTrans />
          </Tool>
          <Tool>
            <Grad id="g1" />
          </Tool>
          <Tool>
            <Grad id="g2" vertical />
          </Tool>
          <Tool $mt={2}>
            <Note />
          </Tool>
          <Tool $more>
            <Pipette size={17} />
          </Tool>
          <Tool>
            <Hand size={17} />
          </Tool>
          <Tool>
            <Search size={17} />
          </Tool>
          <ColorWell>
            <MiniDefault />
            <MiniSwap>
              <SwapArrow />
            </MiniSwap>
            <WellBack>
              <Slash w={19} />
            </WellBack>
            <WellFront>
              <Slash w={20} />
            </WellFront>
          </ColorWell>
          <FormatRow>
            <FormatBtn />
            <TypeTool size={11} />
          </FormatRow>
          <PreviewBtn>
            <Slash w={15} />
          </PreviewBtn>
        </Toolbox>

        <Center>
          <TabBar>
            <Tab $w={147}>
              <X size={9} />
              *Draft 1.indd @ 75%
            </Tab>
            <Tab $w={224} $active>
              <X size={9} />
              *Proposal in progress.indd @ 150%
            </Tab>
          </TabBar>
          <RulerRow>
            <RulerCorner />
            <HRuler>
              {hTicks.map((t) => (
                <HTick key={t}>{t}</HTick>
              ))}
              <HDots $x={469} />
              <HDots $x={570} />
            </HRuler>
            <ScrollCap>
              <ChevronUp size={11} />
            </ScrollCap>
          </RulerRow>

          <CanvasRow>
            <VRuler>
              {vTicks.map((t) => (
                <VTick key={t}>
                  {t.split('').map((d, i) => (
                    <VDigit key={i}>{d}</VDigit>
                  ))}
                </VTick>
              ))}
              <RulerDots $y={189} />
              <RulerDots $y={219} />
            </VRuler>
            <Stage>
              <Sheet $x={0} $y={0} $w={53} $h={43} $c="#4299e0" />
              <Sheet $x={53} $y={0} $w={351} $h={43} $c="#fff" />
              <Sheet $x={406} $y={0} $w={355} $h={43} $c="#4299e0" />
              <Sheet $x={404} $y={0} $w={2} $h={43} $c="#fff" />
              <Sheet $x={0} $y={43} $w={404} $h={465} $c="#333334" />
              <PageEdge $x={404} $y={43} $w={339} $h={446} $c="#fff" />
              <HGuide $x={53} $y={42} $w={351} $c="#8a2438" />
              <HGuide $x={0} $y={42} $w={53} $c={cyan} />
              <HGuide $x={406} $y={43} $w={337} $c={cyan} />
              <HGuide $x={404} $y={42} $w={357} $c="#2f6db0" />
              <HGuide $x={134} $y={396} $w={536} $c="#b04bc0" />
              <HGuide $x={0} $y={507} $w={762} $c={red} />
              <TopFrame>title with more, don&apos;t miss.</TopFrame>
              <TopText>Rectal</TopText>
              <BigWordFrame>
                <BigWord>as</BigWord>
              </BigWordFrame>
              <Circle />
              {vGuides.map((g) => (
                <VGuide key={`${g.x}-${g.y}`} $x={g.x} $y={g.y} $h={g.h} $c={g.c} />
              ))}
              <Percent>96.7%</Percent>
              <PickFrame />
              <DragTip>
                X: 14.2744 in
                <br />
                Y: 7.4375 in
              </DragTip>
              <CursorSpot>
                <Pointer />
              </CursorSpot>
            </Stage>
            <VScroll>
              <VThumb />
            </VScroll>

            <LayersPanel>
              <PanelTabs>
                <PanelTab $w={66} $active>
                  <Updown>
                    <ChevronUp size={6} />
                    <ChevronDown size={6} />
                  </Updown>
                  Layers
                </PanelTab>
                <IconSlot $w={11} />
                <PanelTab $w={37}>Link</PanelTab>
                <PanelTab $w={35}>Stro</PanelTab>
                <PanelTab $w={48}>Colo</PanelTab>
                <IconSlot $w={14}>
                  <ChevronsRight size={13} />
                </IconSlot>
                <TabDivider />
                <IconSlot $w={14}>
                  <Burger />
                </IconSlot>
              </PanelTabs>
              <LayerRow $sel>
                <EyeSlot>
                  <FaEye size={13} />
                </EyeSlot>
                <BlueBar />
                <LayerName>
                  <ChevronRight size={10} color="#bbb" />
                  Text
                </LayerName>
                <FaPencilAlt size={10} color="#cdd6e4" />
                <IconSlot $w={14} />
                <LayerSquare $blue />
              </LayerRow>
              <LayerRow>
                <LayerSquare />
              </LayerRow>
              <LayerRow>
                <LayerSquare />
              </LayerRow>
              <LayerRow>
                <LayerSquare />
              </LayerRow>
              <PanelFoot>
                <FootText>Pages: 4–5, 4 Layers</FootText>
                <FootIcon $w={28}>
                  <NewPage />
                </FootIcon>
                <FootIcon $w={28}>
                  <Trash2 size={13} />
                </FootIcon>
              </PanelFoot>
              <PanelGrip>
                <GripH $w={18} />
              </PanelGrip>
            </LayersPanel>

            <SwatchPanel>
              <PanelTop>
                <X size={9} />
                <ChevronsLeft size={9} />
              </PanelTop>
              <SwatchTabs>
                <SwatchTab>
                  <Updown>
                    <ChevronUp size={6} />
                    <ChevronDown size={6} />
                  </Updown>
                  Swatches
                </SwatchTab>
                <TabMenu>
                  <Burger />
                </TabMenu>
              </SwatchTabs>
              <SwatchTools>
                <WellSm $x={16} $y={18}>
                  <Slash w={18} inner />
                </WellSm>
                <WellSm $x={6} $y={7}>
                  <Slash w={19} />
                </WellSm>
                <FmtBtn>
                  <FmtInner />
                </FmtBtn>
                <TypeTool size={11} />
                <TintLabel>Tint:</TintLabel>
                <TintField>
                  <ChevronRight size={11} />
                </TintField>
                <Pct>%</Pct>
              </SwatchTools>
              <ListWrap>
                <List>
                  <SwatchRow $sel>
                    <Chip>
                      <Slash w={12} />
                    </Chip>
                    <ChipName>[None]</ChipName>
                    <ChipCol>
                      <DirectGlyph />
                    </ChipCol>
                    <ChipCol>
                      <Slash w={12} stroke="#c86a6a" />
                    </ChipCol>
                  </SwatchRow>
                  <SwatchRow>
                    <Chip $c="#000" />
                    <ChipName>[Registration]</ChipName>
                    <ChipCol>
                      <DirectGlyph />
                    </ChipCol>
                    <ChipCol>
                      <RegMark />
                    </ChipCol>
                  </SwatchRow>
                  <SwatchRow>
                    <Chip $c="#fff" />
                    <ChipName>[Paper]</ChipName>
                  </SwatchRow>
                </List>
                <ListScroll>
                  <ChevronUp size={9} />
                  <ListThumb />
                  <ChevronDown size={9} />
                </ListScroll>
              </ListWrap>
              <SwatchFoot>
                <FaCloud size={16} />
                <FootBtn $w={110}>
                  <GridMenu />
                </FootBtn>
                <FootBtn $w={28}>
                  <FaFolder size={13} color="#bbb" />
                </FootBtn>
                <FootBtn $w={27}>
                  <NewPage />
                </FootBtn>
                <FootBtn $w={28}>
                  <Trash2 size={12} color="#777" />
                </FootBtn>
              </SwatchFoot>
              <PanelGrip>
                <GripH $w={18} />
              </PanelGrip>
            </SwatchPanel>
          </CanvasRow>

          <StatusBar>
            <StatSlot $w={30}>
              <Skip back />
            </StatSlot>
            <StatSlot $w={22}>
              <Step back />
            </StatSlot>
            <PageBox>
              <PageVal>5</PageVal>
              <Drop>
                <ChevronDown size={10} />
              </Drop>
            </PageBox>
            <StatSlot $w={32}>
              <Step />
            </StatSlot>
            <StatSlot $w={12}>
              <Skip />
            </StatSlot>
            <StatSlot $w={42}>
              <Clock />
            </StatSlot>
            <StatSlot $w={5} />
            <StatText $w={96}>[Basic] (working)</StatText>
            <StatSlot $w={20}>
              <ChevronDown size={11} />
            </StatSlot>
            <StatSlot $w={26}>
              <Dot />
            </StatSlot>
            <StatText $w={56}>Checking</StatText>
            <StatSlot $w={20}>
              <ChevronDown size={11} />
            </StatSlot>
            <StatSlot $w={16}>
              <ChevronLeft size={11} color="#777" />
            </StatSlot>
            <StatSlot $w={288} />
            <HScroll />
            <StatSlot $w={42} />
            <StatSlot $w={22}>
              <Ico width="14" height="11" viewBox="0 0 14 11">
                <rect x=".5" y=".5" width="13" height="10" stroke="#c4c4c4" />
                <path d="M5 .5v10" stroke="#c4c4c4" />
              </Ico>
            </StatSlot>
          </StatusBar>
        </Center>

        <Dock>
          <DockTop>
            <ChevronsLeft size={9} />
          </DockTop>
          <DockSection $top={4} $pad={0}>
            <DockGrip />
            <DockItem>
              <DockIcon>
                <CCLogo />
              </DockIcon>
              CC Librari...
            </DockItem>
          </DockSection>
          <DockSection $top={4}>
            <DockGrip />
            <DockItem $active>
              <DockIcon>
                <FaLayerGroup size={17} />
              </DockIcon>
              Layers
            </DockItem>
            <DockItem>
              <DockIcon>
                <Link2 size={19} />
              </DockIcon>
              Links
            </DockItem>
            <DockItem>
              <DockIcon>
                <StrokeLines />
              </DockIcon>
              Stroke
            </DockItem>
            <DockItem>
              <DockIcon>
                <FaPalette size={17} />
              </DockIcon>
              Colour
            </DockItem>
          </DockSection>
          <DockSection>
            <DockGrip />
            <DockItem>
              <DockIcon>
                <PagesIcon />
              </DockIcon>
              Pages
            </DockItem>
          </DockSection>
          <DockSection>
            <DockGrip />
            <DockItem>
              <DockIcon>
                <DockGlyph>
                  <StackA />
                  <GlyphChar>A</GlyphChar>
                </DockGlyph>
              </DockIcon>
              Character ...
            </DockItem>
            <DockItem>
              <DockIcon>
                <DockGlyph>
                  <StackA />
                  <GlyphChar>¶</GlyphChar>
                </DockGlyph>
              </DockIcon>
              Paragraph ...
            </DockItem>
          </DockSection>
          <DockFill>
            <DockCorner>
              <Ico width="6" height="8" viewBox="0 0 6 8">
                <path d="M0 0l6 4-6 4z" fill="#bdbdbd" stroke="none" />
              </Ico>
            </DockCorner>
          </DockFill>
        </Dock>
      </Body>
    </Screen>
  </>
)

export default App
